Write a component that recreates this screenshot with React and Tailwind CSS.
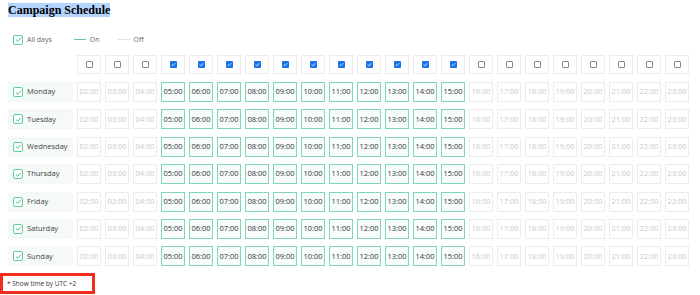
import { useState } from "react";

const days = ["Monday", "Tuesday", "Wednesday", "Thursday", "Friday", "Saturday", "Sunday"];
const hours = Array.from({ length: 22 }, (_, i) => String(i + 2).padStart(2, "0") + ":00");
const activeHours = hours.map((h, i) => i >= 3 && i <= 13);

function GreenCheck() {
    return (
        <span className="flex items-center justify-center w-[10px] h-[10px] border border-[#5ccf9f] rounded-[2px] bg-white">
            <svg viewBox="0 0 10 10" className="w-[7px] h-[7px]">
                <path d="M1.5 5.2 L4 7.5 L8.5 2.5" fill="none" stroke="#3cbf86" strokeWidth="1.4" />
            </svg>
        </span>
    );
}

function SmallBox({ checked }) {
    if (checked) {
        return (
            <span className="flex items-center justify-center w-[7px] h-[7px] rounded-[1px] bg-[#1a73e8]">
                <svg viewBox="0 0 8 8" className="w-[5px] h-[5px]">
                    <path d="M1 4.2 L3 6 L7 2" fill="none" stroke="white" strokeWidth="1.3" />
                </svg>
            </span>
        );
    }
    return <span className="block w-[7px] h-[7px] rounded-[1px] border border-[#888] bg-white" />;
}

export default function App() {
    const [active] = useState(activeHours);

    return (
        <div className="w-[700px] h-[295px] bg-white flex flex-col leading-none" style={{ fontFamily: "'Open Sans', sans-serif" }}>
            <div className="flex pl-[8px] pt-[3px]">
                <h1 className="bg-[#b3d4fd] text-[12px] leading-[14px] font-bold text-black" style={{ fontFamily: "'Liberation Serif', serif" }}>
                    Campaign Schedule
                </h1>
            </div>

            <div className="flex items-center pl-[13px] mt-[18px] h-[9px] text-[7px] text-[#666]">
                <GreenCheck />
                <span className="ml-[4px]">All days</span>
                <span className="ml-[22px] w-[12px] h-[1px] bg-[#5ccf9f]" />
                <span className="ml-[4px]">On</span>
                <span className="ml-[18px] w-[12px] h-[1px] bg-[#e2e2e2]" />
                <span className="ml-[4px]">Off</span>
            </div>

            <div className="flex flex-col pl-[8px] mt-[11px]">
                <div className="flex gap-x-[4px]">
                    <div className="w-[65px]" />
                    {hours.map((h, i) => (
                        <div key={h} className="w-[24px] h-[19px] border border-[#ececec] flex items-center justify-center">
                            <SmallBox checked={active[i]} />
                        </div>
                    ))}
                </div>

                <div className="flex flex-col gap-y-[7.4px] mt-[8px]">
                    {days.map((d) => (
                        <div key={d} className="flex gap-x-[4px]">
                            <div className="w-[65px] h-[20px] bg-[#f5f9f7] flex items-center pl-[5px]">
                                <GreenCheck />
                                <span className="ml-[4px] text-[7.5px] text-[#444]">{d}</span>
                            </div>
                            {hours.map((h, i) =>
                                active[i] ? (
                                    <div key={h} className="w-[24px] h-[20px] border-[1.5px] border-[#7fd7b3] bg-[#f8fdfb] flex items-center justify-center text-[7.5px] text-[#333]">
                                        {h}
                                    </div>
                                ) : (
                                    <div key={h} className="w-[24px] h-[20px] border border-[#ececec] flex items-center justify-center text-[7.5px] text-[#c9c9c9]">
                                        {h}
                                    </div>
                                )
                            )}
                        </div>
                    ))}
                </div>
            </div>

            <div className="mt-[7px] w-[95px] h-[21px] border-[3.5px] border-[#f12d1c] flex items-center pl-[4px] text-[6.5px] text-[#333]">
                * Show time by UTC +2
            </div>
        </div>
    );
}
